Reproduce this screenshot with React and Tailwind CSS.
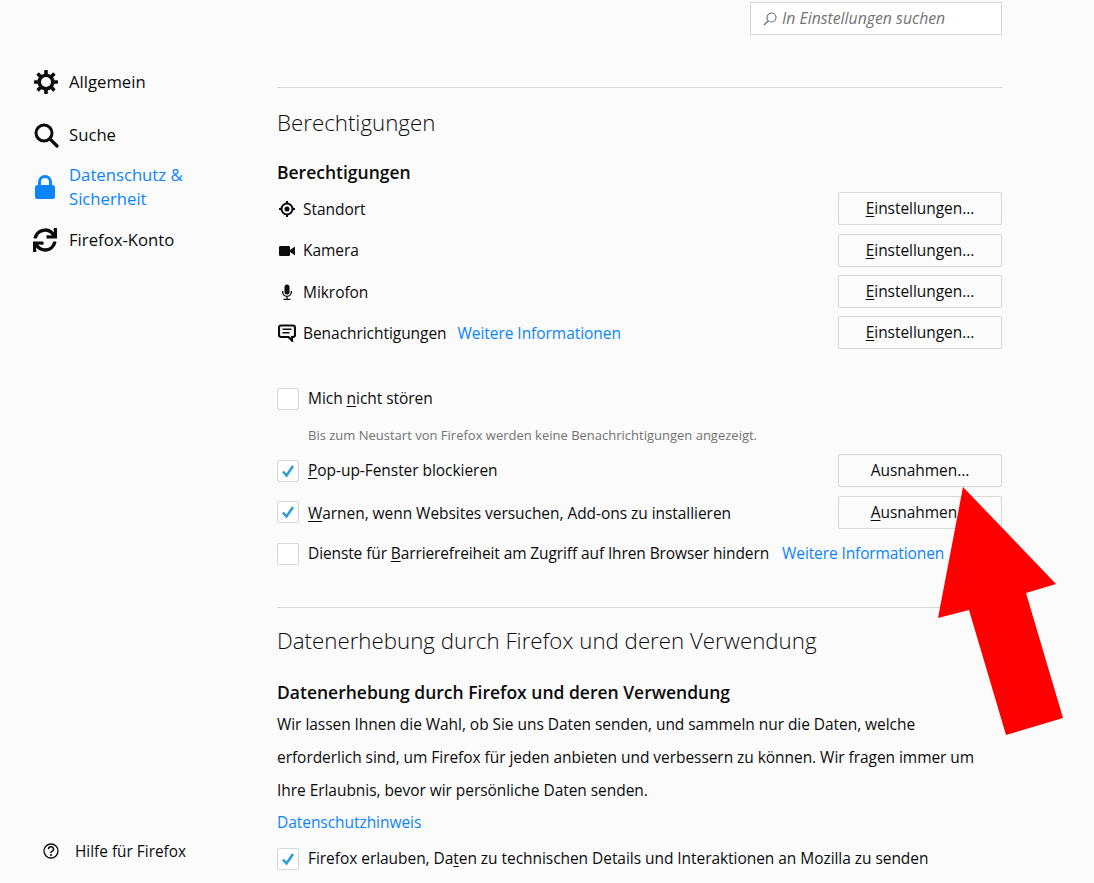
import React from "react";
import { FaSync } from "react-icons/fa";

const Btn = ({ k, rest }) => (
  <button className="w-[164px] h-[33px] shrink-0 rounded-[2px] border border-[#d7d7db] bg-[#fbfbfb] text-center text-[#0c0c0d]">
    <span className="underline underline-offset-2">{k}</span>{rest}
  </button>
);

const Check = ({ on, cls = "" }) => (
  <span className={`w-[22px] h-[22px] shrink-0 rounded-[2px] border border-[#d7d7db] bg-white flex items-center justify-center ${cls}`}>
    {on && (
      <svg width="14" height="14" viewBox="0 0 14 14">
        <path d="M2 7.5 L5.5 11.5 L12 2" fill="none" stroke="#2a9ad8" strokeWidth="2.5" />
      </svg>
    )}
  </span>
);

const U = ({ children }) => <span className="underline underline-offset-2">{children}</span>;

const Gear = () => (
  <svg width="26" height="26" viewBox="0 0 26 26" className="shrink-0">
    <circle cx="13" cy="13" r="6.8" fill="none" stroke="#0c0c0d" strokeWidth="3.6" />
    {[0, 45, 90, 135, 180, 225, 270, 315].map((a) => (
      <rect key={a} x="11.2" y="1" width="3.6" height="6" rx="0.8" fill="#0c0c0d" transform={`rotate(${a} 13 13)`} />
    ))}
  </svg>
);
const Search = () => (
  <svg width="26" height="26" viewBox="0 0 26 26" className="shrink-0">
    <circle cx="11" cy="11" r="8" fill="none" stroke="#0c0c0d" strokeWidth="3" />
    <path d="M17 17 L24 24" stroke="#0c0c0d" strokeWidth="3.2" strokeLinecap="round" />
  </svg>
);
const Lock = () => (
  <svg width="24" height="26" viewBox="0 0 24 26" className="shrink-0">
    <path d="M6.5 12 V8 a5.5 5.5 0 0 1 11 0 V12" fill="none" stroke="#0a84ff" strokeWidth="3" />
    <rect x="2" y="11" width="20" height="14" rx="2.5" fill="#0a84ff" />
  </svg>
);
const Help = () => (
  <svg width="16" height="16" viewBox="0 0 16 16" className="shrink-0">
    <circle cx="8" cy="8" r="7" fill="none" stroke="#0c0c0d" strokeWidth="1.3" />
    <path d="M5.5 6.2 A2.5 2.4 0 1 1 8.9 8.4 Q8 8.8 8 10" fill="none" stroke="#0c0c0d" strokeWidth="1.5" />
    <circle cx="8" cy="12" r="1" fill="#0c0c0d" />
  </svg>
);
const Loc = () => (
  <svg width="16" height="16" viewBox="0 0 16 16">
    <circle cx="8" cy="8" r="5.5" fill="none" stroke="#0c0c0d" strokeWidth="2" />
    <circle cx="8" cy="8" r="2.5" fill="#0c0c0d" />
    <path d="M8 0 V2.5 M8 13.5 V16 M0 8 H2.5 M13.5 8 H16" stroke="#0c0c0d" strokeWidth="2" />
  </svg>
);
const Cam = () => (
  <svg width="16" height="16" viewBox="0 0 16 16">
    <rect x="0" y="3" width="11" height="10" rx="1.2" fill="#0c0c0d" />
    <path d="M11 7 L16 3.5 V12.5 L11 9 Z" fill="#0c0c0d" />
  </svg>
);
const Mic = () => (
  <svg width="16" height="16" viewBox="0 0 16 16">
    <rect x="5.5" y="0.5" width="5" height="10" rx="2.5" fill="#0c0c0d" />
    <path d="M3.7 7 V8 A4.3 4.3 0 0 0 12.3 8 V7 M8 12.3 V15 M4.5 15.3 H11.5" fill="none" stroke="#0c0c0d" strokeWidth="1.3" />
  </svg>
);
const Note = () => (
  <svg width="18" height="18" viewBox="0 0 18 18">
    <path d="M3 1.5 H15 A2 2 0 0 1 17 3.5 V11 A2 2 0 0 1 15 13 H14 V16.5 L10.5 13 H3 A2 2 0 0 1 1 11 V3.5 A2 2 0 0 1 3 1.5 Z" fill="none" stroke="#0c0c0d" strokeWidth="2.2" />
    <path d="M4.5 5.2 H13.5 M4.5 8.8 H11.5" stroke="#0c0c0d" strokeWidth="1.6" />
  </svg>
);

const Perm = ({ icon, label, more, mt, low }) => (
  <div className={`flex items-center h-[33px] ${mt}`}>
    <span className="w-[26px] -ml-[2px] mr-[2px] flex justify-center shrink-0 pr-[3px]">{icon}</span>
    <span className={low ? "pt-[2px]" : ""}>{label}</span>
    {more && <a className="ml-[11px] pt-[2px] text-[#0a84ff]">Weitere Informationen</a>}
    <span className="flex-1" />
    <Btn k="E" rest="instellungen..." />
  </div>
);

export default function App() {
  return (
    <div className="relative h-[883px] w-[1094px] overflow-hidden bg-[#fbfbfb] text-[#0c0c0d] flex font-['Open_Sans','Noto_Sans',sans-serif] text-[15.5px] tracking-[-0.05px]">
      <aside className="w-[277px] shrink-0 flex flex-col pl-[33px] text-[16.7px] tracking-normal">
        <div className="flex items-center gap-[10px] mt-[69px] h-[26px]"><Gear /><span>Allgemein</span></div>
        <div className="flex items-center gap-[10px] mt-[27px] h-[26px]"><Search /><span>Suche</span></div>
        <div className="flex items-center gap-[12px] mt-[15px] text-[#0a84ff] leading-[24px]">
          <span className="flex"><Lock /></span>
          <span>Datenschutz &amp;<br />Sicherheit</span>
        </div>
        <div className="flex items-center gap-[12px] mt-[17px] h-[24px]"><FaSync className="w-[24px] h-[24px] shrink-0" /><span>Firefox-Konto</span></div>
        <div className="flex-1" />
        <div className="flex items-center gap-[16px] ml-[10px] mb-[24px] h-[16px] text-[15.4px]"><Help /><span className="pt-[2px]">Hilfe für Firefox</span></div>
      </aside>

      <main className="w-[725px] shrink-0">
        <div className="flex justify-end pt-[2px]">
          <div className="w-[252px] h-[33px] border border-[#d7d7db] bg-white flex items-center pl-[12px] gap-[5px] text-[#737373] italic text-[15.8px] tracking-normal">
            <svg width="14" height="14" viewBox="0 0 14 14" className="shrink-0">
              <circle cx="8.5" cy="5.5" r="4.5" fill="none" stroke="#737373" strokeWidth="1.2" />
              <path d="M5.3 8.7 L1 13" stroke="#737373" strokeWidth="1.4" />
            </svg>
            <span>In Einstellungen suchen</span>
          </div>
        </div>

        <div className="mt-[52px] border-t border-[#d7d7db]" />
        <h1 className="mt-[20px] h-[30px] leading-[30px] text-[22.3px] font-light tracking-normal">Berechtigungen</h1>
        <h2 className="mt-[22px] h-[24px] leading-[24px] text-[17.5px] font-semibold tracking-normal">Berechtigungen</h2>

        <Perm mt="mt-[8px]" low icon={<Loc />} label="Standort" />
        <Perm mt="mt-[9px]" icon={<Cam />} label="Kamera" />
        <Perm mt="mt-[8px]" low icon={<Mic />} label="Mikrofon" />
        <Perm mt="mt-[8px]" low icon={<Note />} label="Benachrichtigungen" more />

        <div className="flex items-center gap-[9px] mt-[39px] h-[22px]"><Check /><span>Mich <U>n</U>icht stören</span></div>
        <p className="mt-[15px] ml-[31px] h-[20px] leading-[20px] text-[13px] tracking-normal text-[#737373]">Bis zum Neustart von Firefox werden keine Benachrichtigungen angezeigt.</p>

        <div className="flex items-center mt-[9px] h-[33px]">
          <Check on /><span className="ml-[9px]"><U>P</U>op-up-Fenster blockieren</span>
          <span className="flex-1" /><Btn k="" rest="Ausnahmen..." />
        </div>
        <div className="flex items-center mt-[9px] h-[33px]">
          <Check on cls="-mt-[2px]" /><span className="ml-[9px] pt-[2px]"><U>W</U>arnen, wenn Websites versuchen, Add-ons zu installieren</span>
          <span className="flex-1" /><Btn k="A" rest="usnahmen..." />
        </div>
        <div className="flex items-center mt-[14px] h-[22px] tracking-[-0.11px]">
          <Check /><span className="ml-[9px]">Dienste für <U>B</U>arrierefreiheit am Zugriff auf Ihren Browser hindern</span>
          <a className="ml-[13px] text-[#0a84ff]">Weitere Informationen</a>
        </div>

        <div className="mt-[42px] border-t border-[#d7d7db]" />
        <h1 className="mt-[18px] h-[30px] leading-[30px] text-[22.3px] font-light tracking-normal">Datenerhebung durch Firefox und deren Verwendung</h1>
        <h2 className="mt-[24px] h-[24px] leading-[24px] text-[17.5px] font-semibold tracking-normal">Datenerhebung durch Firefox und deren Verwendung</h2>
        <p className="mt-[4px] leading-[33px]">Wir lassen Ihnen die Wahl, ob Sie uns Daten senden, und sammeln nur die Daten, welche<br />erforderlich sind, um Firefox für jeden anbieten und verbessern zu können. Wir fragen immer um<br />Ihre Erlaubnis, bevor wir persönliche Daten senden.</p>
        <a className="block -mt-px h-[33px] leading-[33px] text-[#0a84ff]">Datenschutzhinweis</a>
        <div className="flex items-center mt-[9px] h-[22px]">
          <Check on /><span className="ml-[9px]">Firefox erlauben, Da<U>t</U>en zu technischen Details und Interaktionen an Mozilla zu senden</span>
        </div>
      </main>

      <svg className="absolute left-0 top-0 pointer-events-none" width="1094" height="883">
        <polygon points="963,487 1056,584 1026,593 1063,718 1006,735 969,610 938,618" fill="#ff0000" />
      </svg>
    </div>
  );
}
